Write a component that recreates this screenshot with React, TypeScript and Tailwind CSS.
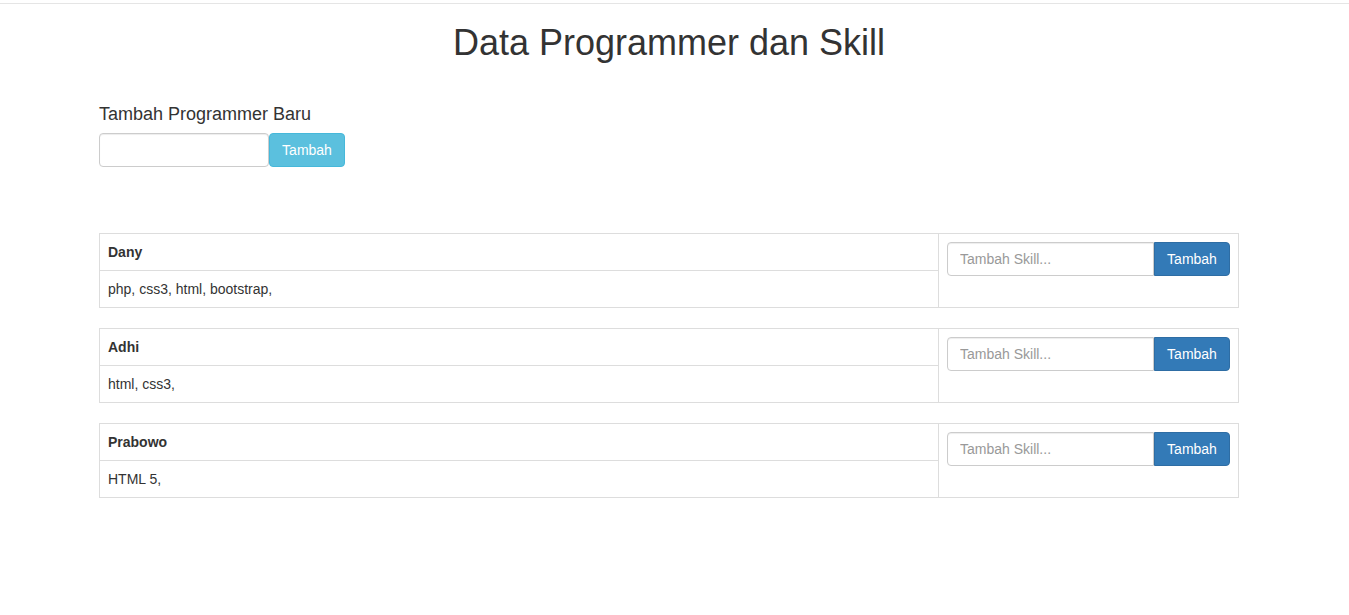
const programmers = [
  { name: "Dany", skills: "php, css3, html, bootstrap," },
  { name: "Adhi", skills: "html, css3," },
  { name: "Prabowo", skills: "HTML 5," },
];

function SkillForm() {
  return (
    <div className="flex h-[34px] w-full">
      <input
        type="text"
        placeholder="Tambah Skill..."
        className="min-w-0 flex-1 rounded-l-[4px] border border-[#ccc] px-3 text-[14px] text-[#555] shadow-[inset_0_1px_1px_rgba(0,0,0,0.075)] outline-none placeholder:text-[#999]"
      />
      <button className="w-[76px] shrink-0 rounded-r-[4px] border border-[#2e6da4] bg-[#337ab7] text-[14px] text-white">
        Tambah
      </button>
    </div>
  );
}

export default function App() {
  return (
    <div className="min-h-[615px] bg-white font-['Liberation_Sans',Arial,sans-serif] text-[14px] leading-5 text-[#333]">
      <div className="h-[3px]" />
      <div className="h-px bg-[#e5e5e5]" />

      <div className="ml-[99px] w-[1140px]">
        <h1 className="mt-[19px] text-center text-[36px] leading-[39.6px] text-[#333]">
          Data Programmer dan Skill
        </h1>

        <h4 className="mt-[42px] text-[18px] leading-[19.8px]">Tambah Programmer Baru</h4>
        <div className="mt-[9px] flex h-[34px]">
          <input
            type="text"
            className="w-[170px] rounded-[4px] border border-[#ccc] px-3 shadow-[inset_0_1px_1px_rgba(0,0,0,0.075)] outline-none"
          />
          <button className="w-[76px] rounded-[4px] border border-[#46b8da] bg-[#5bc0de] text-[14px] text-white">
            Tambah
          </button>
        </div>

        <div className="mt-[66px] flex flex-col gap-5">
          {programmers.map((p) => (
            <div key={p.name} className="flex border border-[#ddd]">
              <div className="w-[839px] border-r border-[#ddd]">
                <div className="border-b border-[#ddd] px-2 py-2 font-bold">{p.name}</div>
                <div className="px-2 py-2">{p.skills}</div>
              </div>
              <div className="flex-1 p-2">
                <SkillForm />
              </div>
            </div>
          ))}
        </div>
      </div>
    </div>
  );
}
